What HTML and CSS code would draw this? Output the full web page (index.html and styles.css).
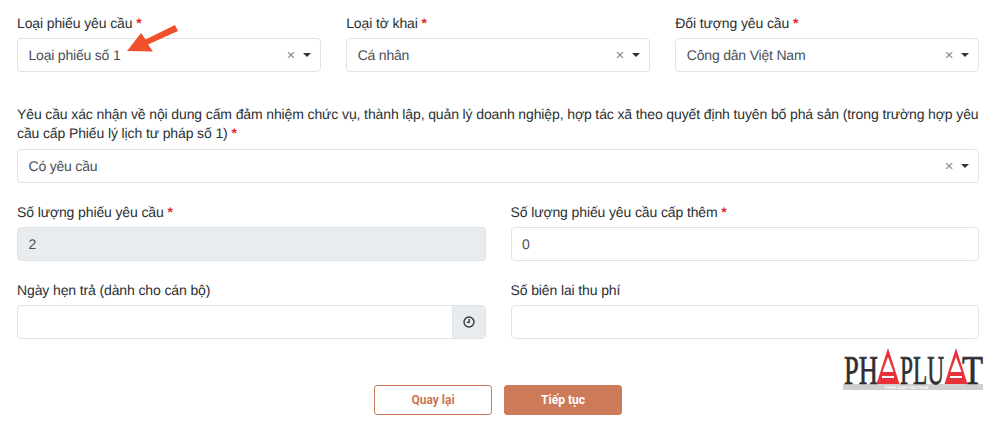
FILE: index.html
```html
<!DOCTYPE html>
<html lang="vi">
<head>
<meta charset="utf-8">
<title>Phiếu yêu cầu</title>
<link rel="stylesheet" href="styles.css">
</head>
<body>
<form class="form">
  <div class="row three">
    <div class="field"><label class="label">Loại phiếu yêu cầu <span class="req">*</span></label>
      <div class="control select"><span class="value">Loại phiếu số 1</span><span class="clear">×</span><span class="caret"></span></div></div>
    <div class="field"><label class="label">Loại tờ khai <span class="req">*</span></label>
      <div class="control select"><span class="value">Cá nhân</span><span class="clear">×</span><span class="caret"></span></div></div>
    <div class="field"><label class="label">Đối tượng yêu cầu <span class="req">*</span></label>
      <div class="control select"><span class="value">Công dân Việt Nam</span><span class="clear">×</span><span class="caret"></span></div></div>
  </div>
  <div class="field long">
    <label class="label multi">Yêu cầu xác nhận về nội dung cấm đảm nhiệm chức vụ, thành lập, quản lý doanh nghiệp, hợp tác xã theo quyết định tuyên bố phá sản (trong trường hợp yêu cầu cấp Phiếu lý lịch tư pháp số 1) <span class="req">*</span></label>
    <div class="control select"><span class="value">Có yêu cầu</span><span class="clear">×</span><span class="caret"></span></div>
  </div>
  <div class="row two">
    <div class="field"><label class="label">Số lượng phiếu yêu cầu <span class="req">*</span></label>
      <div class="control disabled"><span class="value">2</span></div></div>
    <div class="field"><label class="label">Số lượng phiếu yêu cầu cấp thêm <span class="req">*</span></label>
      <div class="control"><span class="value">0</span></div></div>
  </div>
  <div class="row two">
    <div class="field"><label class="label">Ngày hẹn trả (dành cho cán bộ)</label>
      <div class="control group"><span class="value"></span><span class="addon">
        <svg class="clock" viewBox="0 0 14 14" width="14" height="14"><circle cx="7" cy="7" r="5"/><path d="M7.200 4V7.400H4.800"/></svg>
      </span></div></div>
    <div class="field"><label class="label">Số biên lai thu phí</label>
      <div class="control"><span class="value"></span></div></div>
  </div>
  <div class="actions">
    <button type="button" class="btn outline">Quay lại</button>
    <button type="button" class="btn solid">Tiếp tục</button>
  </div>
</form>
<svg class="arrow" viewBox="0 0 56 30" width="56" height="30"><path d="M2 27 16 9 20.500 15.500 50 1 53 7 23 20.500 28 27.500Z"/></svg>
<svg class="logo" viewBox="0 0 146 46" width="146" height="46">
  <path class="grey" d="M0 36H140V42H0Z"/>
  <text class="lt" x="1" y="36" textLength="34" lengthAdjust="spacingAndGlyphs">PH</text>
  <text class="lt" x="57" y="36" textLength="44" lengthAdjust="spacingAndGlyphs">PLU</text>
  <text class="lt" x="119" y="36" textLength="21" lengthAdjust="spacingAndGlyphs">T</text>
  <path class="red" d="M45 0 33.500 36H56.500Z"/>
  <path class="white" d="M45 9 39.500 24H50.500Z"/>
  <path class="white" d="M39 28H51V30H39Z"/>
  <path class="red" d="M113 0 101.500 36H124.500Z"/>
  <path class="white" d="M113 9 107.500 24H118.500Z"/>
  <path class="white" d="M107 28H119V30H107Z"/>
  <text class="tiny" x="42" y="41">PHÁP LUẬT VIỆT NAM</text>
</svg>
</body>
</html>
```
FILE: styles.css
```css
* { box-sizing: border-box; }
html, body { margin: 0; padding: 0; background: #fff; }
body {
  width: 1000px;
  height: 424px;
  overflow: hidden;
  position: relative;
  font-family: "Liberation Sans", Roboto, sans-serif;
  font-size: 14px;
  color: #212529;
  text-rendering: geometricPrecision;
}
.form { padding: 14px 21px 0 17px; display: flex; flex-direction: column; }
.row { display: grid; }
.three { grid-template-columns: repeat(3, 1fr); column-gap: 25.500px; }
.two { grid-template-columns: repeat(2, 1fr); column-gap: 25px; margin-bottom: 20px; }
.field { display: flex; flex-direction: column; }
.long { margin-top: 33px; margin-bottom: 20px; }
.label { display: block; line-height: 19px; height: 19px; margin-bottom: 5px; color: #2b2f33; white-space: nowrap; letter-spacing: -.12px; }
.multi { height: auto; white-space: normal; margin-bottom: 6px; }
.req { color: #e02a2a; font-weight: 700; }
.control {
  height: 34px;
  border: 1px solid #dfe3e7;
  border-radius: 4px;
  display: flex;
  align-items: center;
  padding: 0 0 0 10.500px;
  background: #fff;
  color: #495057;
}
.value { flex: 1; letter-spacing: -.2px; }
.select { padding-left: 10.500px; }
.clear { color: #888; font-size: 15px; margin-right: 4.500px; line-height: 1; }
.caret { width: 0; height: 0; border-left: 4.500px solid transparent; border-right: 4.500px solid transparent; border-top: 4.500px solid #333; margin-right: 9px; margin-left: 3px; }
.disabled { background: #e9ecef; }
.group { padding-right: 0; overflow: hidden; }
.addon { width: 33px; height: 100%; background: #e9ecef; border-left: 1px solid #dfe3e7; display: flex; align-items: center; justify-content: center; }
.clock { fill: none; stroke: #33393f; stroke-width: 1.400; }
.actions { display: flex; justify-content: center; gap: 12px; margin-top: 26px; }
.btn { width: 118px; height: 30px; border-radius: 3px; font: 700 12px Roboto, sans-serif; border: 1px solid #cf7a5b; }
.outline { background: #fff; color: #cb7452; }
.solid { background: #cd7a59; color: #fff; }
.arrow { position: absolute; left: 125px; top: 24px; fill: #f0512a; }
.logo { position: absolute; left: 843px; top: 348px; }
.lt { font: 400 41px "Liberation Serif", serif; fill: #2e2e30; stroke: #2e2e30; stroke-width: .7px; }
.grey { fill: #cfcfcf; }
.red { fill: #e8323a; }
.white { fill: #fff; }
.tiny { font: 700 4px "Liberation Sans", sans-serif; fill: #fff; }
```
